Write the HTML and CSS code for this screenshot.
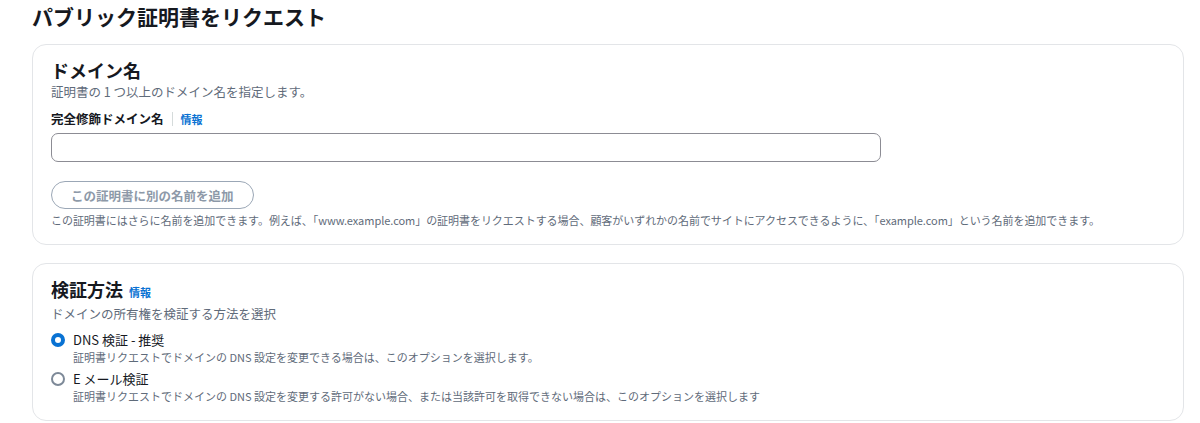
FILE: index.html
```html
<!DOCTYPE html>
<html lang="ja">
<head>
  <meta charset="UTF-8">
  <title>パブリック証明書をリクエスト</title>
  <link rel="stylesheet" href="styles.css">
</head>
<body>

  <div id="page">
    <h1 class="page-title">パブリック証明書をリクエスト</h1>

    <div class="card">
      <h2 class="card-title">ドメイン名</h2>
      <p class="card-desc">証明書の 1 つ以上のドメイン名を指定します。</p>

      <div class="field">
        <div class="field-label">
          <span>完全修飾ドメイン名</span>
          <span class="sep"></span>
          <a class="info-link" href="#">情報</a>
        </div>
        <input type="text" class="text-input">
      </div>

      <button class="pill-btn" disabled>この証明書に別の名前を追加</button>
      <p class="hint">この証明書にはさらに名前を追加できます。例えば、「www.example.com」の証明書をリクエストする場合、顧客がいずれかの名前でサイトにアクセスできるように、「example.com」という名前を追加できます。</p>
    </div>

    <div class="card">
      <h2 class="card-title">検証方法 <a class="info-link" href="#">情報</a></h2>
      <p class="card-desc">ドメインの所有権を検証する方法を選択</p>

      <div class="radio-group">
        <label class="radio-row">
          <span class="radio checked"></span>
          <span class="radio-text">
            <span class="radio-label">DNS 検証 - 推奨</span>
            <span class="radio-desc">証明書リクエストでドメインの DNS 設定を変更できる場合は、このオプションを選択します。</span>
          </span>
        </label>
        <label class="radio-row">
          <span class="radio"></span>
          <span class="radio-text">
            <span class="radio-label">E メール検証</span>
            <span class="radio-desc">証明書リクエストでドメインの DNS 設定を変更する許可がない場合、または当該許可を取得できない場合は、このオプションを選択します</span>
          </span>
        </label>
      </div>
    </div>
  </div>

</body>
</html>
```

FILE: styles.css
```css
* {
  margin: 0;
  padding: 0;
  box-sizing: border-box;
}

body {
  font-family: "Noto Sans CJK JP", "Noto Sans", sans-serif;
  background-color: #ffffff;
  color: #16191f;
  overflow: hidden;
}

#page {
  padding: 0 16px 0 32px;
}

.page-title {
  font-size: 21px;
  font-weight: 700;
  line-height: 32px;
  color: #16191f;
  margin-bottom: 12px;
}

.card {
  border: 1px solid #e3e5e8;
  border-radius: 14px;
  padding: 12px 18px 16px 18px;
  margin-bottom: 18px;
}

.card-title {
  font-size: 18px;
  font-weight: 700;
  line-height: 26px;
  display: flex;
  align-items: baseline;
  gap: 6px;
}

.card-desc {
  font-size: 12.5px;
  line-height: 17px;
  color: #5f6b7a;
}

.field {
  margin-top: 10px;
}

.field-label {
  display: flex;
  align-items: center;
  gap: 8px;
  font-size: 12.5px;
  font-weight: 700;
  line-height: 18px;
}

.sep {
  width: 1px;
  height: 14px;
  background-color: #d5dbdb;
}

.info-link {
  color: #0972d3;
  font-size: 11px;
  font-weight: 700;
  text-decoration: none;
}

.text-input {
  display: block;
  width: 830px;
  height: 29px;
  margin-top: 5px;
  border: 1px solid #8c8c94;
  border-radius: 7px;
  background-color: #ffffff;
  outline: none;
}

.pill-btn {
  display: block;
  margin-top: 19px;
  height: 28px;
  padding: 0 19px;
  border: 1px solid #9ba7b6;
  border-radius: 14px;
  background-color: #ffffff;
  color: #8d99a8;
  font-family: inherit;
  font-size: 12.5px;
  font-weight: 700;
}

.hint {
  font-size: 11px;
  line-height: 16px;
  color: #5f6b7a;
  margin-top: 3px;
  letter-spacing: -0.05px;
}

.radio-group {
  margin-top: 9px;
  display: flex;
  flex-direction: column;
  gap: 5px;
}

.radio-row {
  display: flex;
  align-items: flex-start;
  gap: 8px;
}

.radio {
  width: 14px;
  height: 14px;
  margin-top: 2px;
  border-radius: 50%;
  border: 2px solid #7d8998;
  background-color: #ffffff;
  flex-shrink: 0;
}

.radio.checked {
  border: 4px solid #0972d3;
}

.radio-text {
  display: flex;
  flex-direction: column;
}

.radio-label {
  font-size: 13px;
  line-height: 18px;
  color: #16191f;
}

.radio-desc {
  font-size: 11px;
  line-height: 16px;
  color: #5f6b7a;
}
```
